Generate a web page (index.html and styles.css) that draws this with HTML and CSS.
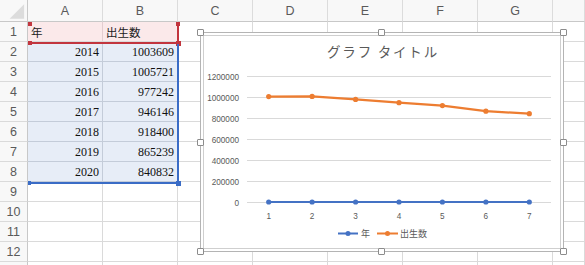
FILE: index.html
```html
<!DOCTYPE html>
<html lang="ja">
<head>
<meta charset="utf-8">
<title>Sheet</title>
<link rel="stylesheet" href="styles.css">
</head>
<body>
<div class="sheet">
  <div class="grid">
    <div class="cell corner"><svg class="tri" width="28" height="22" viewBox="0 0 28 22"><polygon points="10,19 25,19 25,4" fill="#dcdcdc"/></svg></div>
    <div class="cell colh">A</div><div class="cell colh">B</div><div class="cell colh">C</div><div class="cell colh">D</div><div class="cell colh">E</div><div class="cell colh">F</div><div class="cell colh">G</div><div class="cell colh last"></div>

    <div class="cell rowh">1</div><div class="cell pink txt">年</div><div class="cell pink txt">出生数</div><div class="cell"></div><div class="cell"></div><div class="cell"></div><div class="cell"></div><div class="cell"></div><div class="cell"></div>
    <div class="cell rowh">2</div><div class="cell blue num">2014</div><div class="cell blue num">1003609</div><div class="cell"></div><div class="cell"></div><div class="cell"></div><div class="cell"></div><div class="cell"></div><div class="cell"></div>
    <div class="cell rowh">3</div><div class="cell blue num">2015</div><div class="cell blue num">1005721</div><div class="cell"></div><div class="cell"></div><div class="cell"></div><div class="cell"></div><div class="cell"></div><div class="cell"></div>
    <div class="cell rowh">4</div><div class="cell blue num">2016</div><div class="cell blue num">977242</div><div class="cell"></div><div class="cell"></div><div class="cell"></div><div class="cell"></div><div class="cell"></div><div class="cell"></div>
    <div class="cell rowh">5</div><div class="cell blue num">2017</div><div class="cell blue num">946146</div><div class="cell"></div><div class="cell"></div><div class="cell"></div><div class="cell"></div><div class="cell"></div><div class="cell"></div>
    <div class="cell rowh">6</div><div class="cell blue num">2018</div><div class="cell blue num">918400</div><div class="cell"></div><div class="cell"></div><div class="cell"></div><div class="cell"></div><div class="cell"></div><div class="cell"></div>
    <div class="cell rowh">7</div><div class="cell blue num">2019</div><div class="cell blue num">865239</div><div class="cell"></div><div class="cell"></div><div class="cell"></div><div class="cell"></div><div class="cell"></div><div class="cell"></div>
    <div class="cell rowh">8</div><div class="cell blue num">2020</div><div class="cell blue num">840832</div><div class="cell"></div><div class="cell"></div><div class="cell"></div><div class="cell"></div><div class="cell"></div><div class="cell"></div>
    <div class="cell rowh">9</div><div class="cell"></div><div class="cell"></div><div class="cell"></div><div class="cell"></div><div class="cell"></div><div class="cell"></div><div class="cell"></div><div class="cell"></div>
    <div class="cell rowh">10</div><div class="cell"></div><div class="cell"></div><div class="cell"></div><div class="cell"></div><div class="cell"></div><div class="cell"></div><div class="cell"></div><div class="cell"></div>
    <div class="cell rowh">11</div><div class="cell"></div><div class="cell"></div><div class="cell"></div><div class="cell"></div><div class="cell"></div><div class="cell"></div><div class="cell"></div><div class="cell"></div>
    <div class="cell rowh">12</div><div class="cell"></div><div class="cell"></div><div class="cell"></div><div class="cell"></div><div class="cell"></div><div class="cell"></div><div class="cell"></div><div class="cell"></div>
    <div class="cell rowh"></div><div class="cell"></div><div class="cell"></div><div class="cell"></div><div class="cell"></div><div class="cell"></div><div class="cell"></div><div class="cell"></div><div class="cell"></div>
  </div>

  <div class="sel-red">
    <span class="h h-tl"></span><span class="h h-bl"></span><span class="h h-tr"></span><span class="h h-br"></span>
  </div>
  <div class="sel-blue">
    <span class="hb hb-bl"></span><span class="hb hb-br"></span>
  </div>

  <div class="chart">
    <svg class="plot" width="364" height="220" viewBox="0 0 364 220">
      <text class="title" x="183" y="25" text-anchor="middle">グラフ タイトル</text>
      <g stroke="#d9d9d9" stroke-width="1">
        <line x1="47" y1="44.5" x2="351" y2="44.5"/>
        <line x1="47" y1="65.5" x2="351" y2="65.5"/>
        <line x1="47" y1="86.5" x2="351" y2="86.5"/>
        <line x1="47" y1="107.5" x2="351" y2="107.5"/>
        <line x1="47" y1="128.5" x2="351" y2="128.5"/>
        <line x1="47" y1="149.5" x2="351" y2="149.5"/>
        <line x1="47" y1="170.5" x2="351" y2="170.5"/>
      </g>
      <g class="ylab" text-anchor="end">
        <text x="39" y="47.5">1200000</text>
        <text x="39" y="68.5">1000000</text>
        <text x="39" y="89.5">800000</text>
        <text x="39" y="110.5">600000</text>
        <text x="39" y="131.5">400000</text>
        <text x="39" y="152.5">200000</text>
        <text x="39" y="173.5">0</text>
      </g>
      <g class="xlab" text-anchor="middle">
        <text x="68.7" y="187">1</text>
        <text x="112.1" y="187">2</text>
        <text x="155.6" y="187">3</text>
        <text x="199" y="187">4</text>
        <text x="242.4" y="187">5</text>
        <text x="285.9" y="187">6</text>
        <text x="329.3" y="187">7</text>
      </g>
      <polyline fill="none" stroke="#4472c4" stroke-width="2" points="68.7,170 112.1,170 155.6,170 199,170 242.4,170 285.9,170 329.3,170"/>
      <g fill="#4472c4">
        <circle cx="68.7" cy="170" r="2.6"/><circle cx="112.1" cy="170" r="2.6"/><circle cx="155.6" cy="170" r="2.6"/><circle cx="199" cy="170" r="2.6"/><circle cx="242.4" cy="170" r="2.6"/><circle cx="285.9" cy="170" r="2.6"/><circle cx="329.3" cy="170" r="2.6"/>
      </g>
      <polyline fill="none" stroke="#ed7d31" stroke-width="2.25" stroke-linejoin="round" points="68.7,64.6 112.1,64.4 155.6,67.4 199,70.7 242.4,73.6 285.9,79.2 329.3,81.7"/>
      <g fill="#ed7d31">
        <circle cx="68.7" cy="64.6" r="2.6"/><circle cx="112.1" cy="64.4" r="2.6"/><circle cx="155.6" cy="67.4" r="2.6"/><circle cx="199" cy="70.7" r="2.6"/><circle cx="242.4" cy="73.6" r="2.6"/><circle cx="285.9" cy="79.2" r="2.6"/><circle cx="329.3" cy="81.7" r="2.6"/>
      </g>
      <line x1="138" y1="201.5" x2="158" y2="201.5" stroke="#4472c4" stroke-width="2"/>
      <circle cx="148" cy="201.5" r="2.5" fill="#4472c4"/>
      <text class="leg" x="161" y="205">年</text>
      <line x1="177" y1="201.5" x2="198" y2="201.5" stroke="#ed7d31" stroke-width="2"/>
      <circle cx="187.5" cy="201.5" r="2.5" fill="#ed7d31"/>
      <text class="leg" x="200" y="205">出生数</text>
    </svg>
    <span class="ch c-tl"></span><span class="ch c-tm"></span><span class="ch c-tr"></span>
    <span class="ch c-ml"></span><span class="ch c-mr"></span>
    <span class="ch c-bl"></span><span class="ch c-bm"></span><span class="ch c-br"></span>
  </div>
</div>
</body>
</html>
```
FILE: styles.css
```css
* { box-sizing: border-box; }
html, body {
  margin: 0;
  padding: 0;
  background: #ffffff;
  overflow: hidden;
}
.sheet {
  position: relative;
  width: 585px;
  height: 265px;
  overflow: hidden;
}
.grid {
  display: grid;
  grid-template-columns: 28px repeat(7, 75px) 1fr;
  grid-template-rows: 22px;
  grid-auto-rows: 20px;
}
.cell {
  border-right: 1px solid #dadada;
  border-bottom: 1px solid #dadada;
  background: #ffffff;
  font-family: "Liberation Serif", "Noto Sans CJK JP", serif;
  font-size: 12px;
  color: #000;
  display: flex;
  align-items: center;
  overflow: hidden;
  white-space: nowrap;
}
.corner {
  background: #f8f8f8;
  border-right-color: #c8c8c8;
  border-bottom-color: #c8c8c8;
  position: relative;
}
.tri { display: block; }
.colh {
  background: #f8f8f8;
  border-bottom-color: #c8c8c8;
  border-right-color: #dcdcdc;
  justify-content: center;
  font-family: "Liberation Sans", "Noto Sans CJK JP", sans-serif;
  font-size: 12.5px;
  color: #5a5a5a;
}
.rowh {
  background: #f8f8f8;
  border-right-color: #c8c8c8;
  border-bottom-color: #dadada;
  justify-content: center;
  font-family: "Liberation Sans", sans-serif;
  font-size: 12.5px;
  color: #5a5a5a;
}
.pink {
  background: #fbe9ea;
  border-right-color: #e3cdd0;
}
.blue {
  background: #e7edf7;
  border-right-color: #c4ccd9;
  border-bottom-color: #c4ccd9;
}
.txt {
  font-family: "Noto Sans CJK JP", sans-serif;
  font-size: 11.5px;
  color: #222;
  padding-left: 3px;
}
.num {
  justify-content: flex-end;
  padding-right: 3px;
  font-size: 12px;
  padding-top: 1px;
  color: #111;
}

/* selection ranges */
.sel-red {
  position: absolute;
  left: 28px;
  top: 22px;
  width: 151px;
  height: 22px;
  border-right: 2px solid #c2353e;
  border-bottom: 2px solid #c2353e;
}
.h {
  position: absolute;
  width: 4px;
  height: 4px;
  background: #c2353e;
}
.h-tl { left: 0; top: 0; }
.h-tr { right: -3px; top: 0; }
.h-bl { left: 0; bottom: -3px; }
.h-br { right: -4px; bottom: -4px; width: 5px; height: 5px; }

.sel-blue {
  position: absolute;
  left: 28px;
  top: 44px;
  width: 151px;
  height: 140px;
  border-right: 2px solid #3a6cc6;
  border-bottom: 2px solid #3a6cc6;
}
.hb {
  position: absolute;
  background: #3a6cc6;
}
.hb-bl { left: 0; bottom: -3px; width: 3px; height: 4px; }
.hb-br { right: -4px; bottom: -4px; width: 5px; height: 5px; }

/* chart */
.chart {
  position: absolute;
  left: 200px;
  top: 32px;
  width: 364px;
  height: 220px;
  background: #ffffff;
  border: 1px solid #b4b4b4;
  box-shadow: inset 0 0 0 2px #ffffff, inset 0 0 0 3px #cfcfcf;
}
.plot {
  position: absolute;
  left: -1px;
  top: -1px;
}
.title {
  font-family: "Noto Sans CJK JP", sans-serif;
  font-size: 13.5px;
  fill: #595959;
  letter-spacing: 1.8px;
}
.ylab text, .xlab text {
  font-family: "Liberation Sans", sans-serif;
  font-size: 8.2px;
  fill: #595959;
}
.leg {
  font-family: "Noto Sans CJK JP", sans-serif;
  font-size: 9px;
  fill: #595959;
}
.ch {
  position: absolute;
  width: 7px;
  height: 7px;
  background: #ffffff;
  border: 1px solid #8c8c8c;
  border-radius: 1px;
}
.c-tl { left: -4px; top: -4px; }
.c-tm { left: 177px; top: -4px; }
.c-tr { right: -4px; top: -4px; }
.c-ml { left: -4px; top: 106px; }
.c-mr { right: -4px; top: 106px; }
.c-bl { left: -4px; bottom: -4px; }
.c-bm { left: 177px; bottom: -4px; }
.c-br { right: -4px; bottom: -4px; }
```
